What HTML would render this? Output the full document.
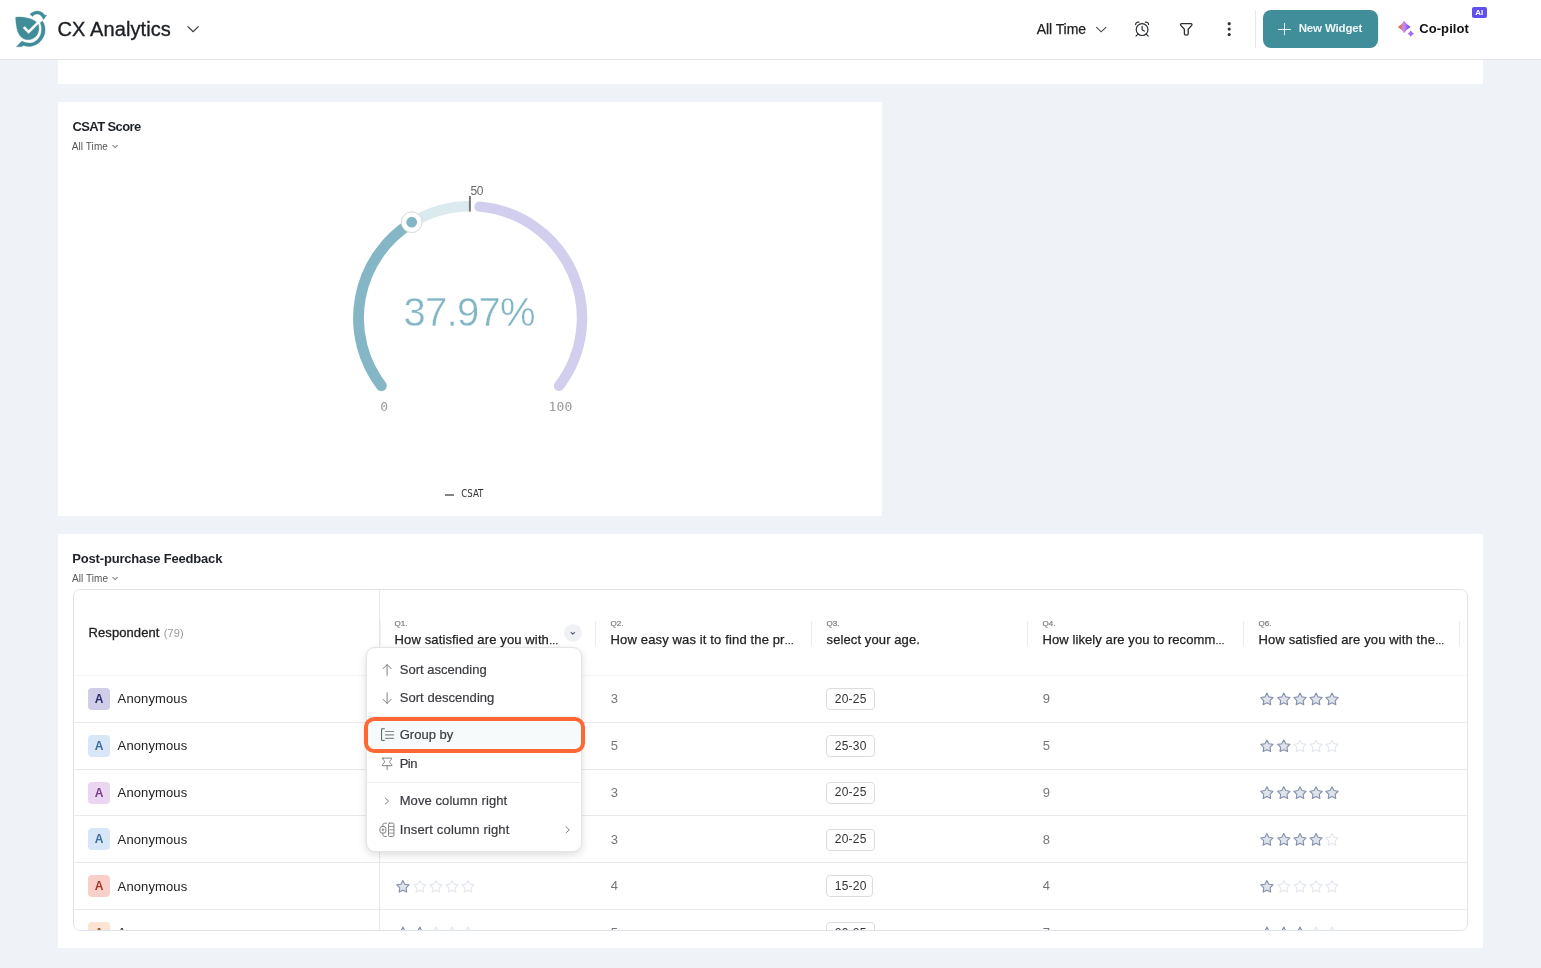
<!DOCTYPE html>
<html lang="en"><head><meta charset="utf-8"><title>CX Analytics</title>
<style>
html,body{margin:0;padding:0}
body{width:1541px;height:968px;overflow:hidden;background:#eff3f8;position:relative;font-family:"Liberation Sans",sans-serif;color:#222}
.t{position:absolute;line-height:1;white-space:nowrap}
.abs{position:absolute}
.card{position:absolute;background:#fff}
svg{position:absolute;overflow:visible}
.hl{position:absolute;height:1px;background:#e9eaee}
.vl{position:absolute;width:1px;background:#e6e9f0}
.av{position:absolute;width:22px;height:22px;border-radius:4px;text-align:center;font-weight:700;font-size:12px;line-height:22px}
.tag{position:absolute;height:20px;border:1px solid #dcdcdc;border-radius:4px;box-sizing:content-box;background:#fff}
</style></head><body>
<div id="app" style="position:absolute;left:0;top:0;width:1541px;height:968px;will-change:transform">

<div class="abs" style="left:0;top:0;width:1541px;height:59px;background:#fff;border-bottom:1px solid #e2e2e2"></div>
<svg id="logo" style="left:0;top:0" width="60" height="59" viewBox="0 0 60 59">
<g fill="#408d99" stroke="#408d99" stroke-width="0.35" stroke-linejoin="round">
<path d="M15.7 17.2 C22 16.6 31 17.6 36.4 22.2 L28.6 30.0 L24.7 26.1 L22.7 28.1 L28.6 34.0 L38.3 24.3 C39.6 28 39 33 35.8 36.6 C32.6 40 27 40.6 23 38.4 C19.4 36.2 17.6 32.4 16.8 28 C16.2 24.4 15.6 20.6 15.7 17.2 Z"/>
<path d="M40.2 22.7 L42.4 20.9 C44.6 24 45.8 28.6 44.8 33.2 C43.4 39.6 38.4 44.8 31.6 46.2 C28.8 46.7 26 46.4 23.6 45.5 L21.2 46.8 L16.4 46.8 L21.9 41.1 C24.4 42.6 27.6 43.4 30.6 43 C35.6 42.2 39.6 38.4 41 33.4 C42 29.6 41.6 25.8 40.2 22.7 Z"/>
<path d="M30 14.1 C31.8 12.2 34.6 10.9 37.6 10.9 C40.8 11 43.4 12.8 44.8 15.2 L46.9 15.1 L43.2 19.7 C42.6 17.6 41.4 15.6 39.4 14.6 C37.2 13.5 34.4 14 32.4 16.6 Z"/>
</g></svg>
<span class="t" style="left:57.6px;top:18.87px;font-size:20px;font-weight:400;color:#1c1f23;letter-spacing:0.08px;-webkit-text-stroke:0.35px #1c1f23;">CX Analytics</span>
<svg style="left:186px;top:24px" width="14" height="10" viewBox="186 24 14 10"><path d="M187.6 26.4 L193.1 31.6 L198.6 26.4" fill="none" stroke="#333" stroke-width="1.2"/></svg>
<span class="t" style="left:1036.8px;top:22.15px;font-size:14px;font-weight:400;color:#222;letter-spacing:-0.08px;-webkit-text-stroke:0.25px #222;">All Time</span>
<svg style="left:1094px;top:24px" width="14" height="10" viewBox="1094 24 14 10"><path d="M1096.3 27.2 L1101.2 31.8 L1106.1 27.2" fill="none" stroke="#444" stroke-width="1.1"/></svg>
<svg style="left:1132px;top:19px" width="20" height="20" viewBox="1132 19 20 20" fill="none" stroke="#2b2f33" stroke-width="1.2" stroke-linecap="round" stroke-linejoin="round">
<circle cx="1142.1" cy="29.6" r="5.9"/>
<path d="M1142.1 26.3 V29.8 L1144.3 31.1"/>
<path d="M1135.6 24.6 C1135.6 23 1137 21.8 1138.8 22.1"/>
<path d="M1148.6 24.6 C1148.6 23 1147.2 21.8 1145.4 22.1"/>
<path d="M1138 34.2 L1136 36.2 M1146.2 34.2 L1148.2 36.2"/>
</svg>
<svg style="left:1176px;top:19px" width="20" height="20" viewBox="1176 19 20 20" fill="none" stroke="#2b2f33" stroke-width="1.3" stroke-linejoin="round">
<path d="M1181.6 23.6 H1190.9 C1191.9 23.6 1192.3 24.7 1191.7 25.4 L1188.2 29.2 V34 C1188.2 35.4 1184.4 35.4 1184.4 34 V29.2 L1180.8 25.4 C1180.2 24.7 1180.6 23.6 1181.6 23.6 Z"/>
</svg>
<svg style="left:1224px;top:19px" width="10" height="20" viewBox="1224 19 10 20"><circle cx="1229.2" cy="23.7" r="1.6" fill="#333"/><circle cx="1229.2" cy="29.1" r="1.6" fill="#333"/><circle cx="1229.2" cy="34.6" r="1.6" fill="#333"/></svg>
<div class="vl" style="left:1255px;top:10px;height:38px;background:#e8e8e8"></div>
<div class="abs" style="left:1263px;top:10px;width:115px;height:38px;border-radius:8px;background:#408e9a"></div>
<svg style="left:1276px;top:21px" width="16" height="16" viewBox="1276 21 16 16"><path d="M1278 29.5 H1291 M1284.5 23 V35.2" stroke="#e6f2f3" stroke-width="1" fill="none"/></svg>
<span class="t" style="left:1298.7px;top:23.37px;font-size:11.5px;font-weight:700;color:#eef7f8;letter-spacing:-0.16px;">New Widget</span>
<div class="vl" style="left:1378px;top:11px;height:36px;background:#f0f0f0"></div>
<svg style="left:1396px;top:19px" width="20" height="20" viewBox="1396 19 20 20">
<defs><linearGradient id="cg" x1="0" y1="0" x2="1" y2="0"><stop offset="0" stop-color="#e2703f"/><stop offset="0.2" stop-color="#d9745e"/><stop offset="0.32" stop-color="#d57fae"/><stop offset="0.45" stop-color="#cf86ea"/><stop offset="0.62" stop-color="#b47af2"/><stop offset="0.85" stop-color="#6d4ff6"/><stop offset="1" stop-color="#7a5cf6"/></linearGradient>
<linearGradient id="cg2" x1="0" y1="1" x2="1" y2="0"><stop offset="0" stop-color="#d07ef0"/><stop offset="0.5" stop-color="#a86cf4"/><stop offset="1" stop-color="#6a48f6"/></linearGradient></defs>
<path d="M1404.2 20.8 Q1406.5 24.7 1410.6 27 Q1406.5 29.3 1404.2 33.2 Q1401.9 29.3 1397.8 27 Q1401.9 24.7 1404.2 20.8 Z" fill="url(#cg)"/>
<path d="M1410.7 30.6 Q1411.9 32.8 1414 33.8 Q1411.9 34.8 1410.7 37 Q1409.5 34.8 1407.6 33.8 Q1409.5 32.8 1410.7 30.6 Z" fill="url(#cg2)"/>
</svg>
<span class="t" style="left:1419.2px;top:21.90px;font-size:13px;font-weight:700;color:#111;letter-spacing:0.09px;">Co-pilot</span>
<div class="abs" style="left:1472px;top:7px;width:15px;height:11px;border-radius:2px;background:#5d4ff0"></div>
<span class="t" style="left:1475.2px;top:8.83px;font-size:8px;font-weight:700;color:#fff;letter-spacing:0px;">AI</span>
<div class="card" style="left:58px;top:60px;width:1425px;height:24px"></div>
<div class="card" style="left:58px;top:102px;width:824px;height:414px"></div>
<div class="card" style="left:58px;top:534px;width:1425px;height:414px"></div>
<span class="t" style="left:72.5px;top:119.90px;font-size:13px;font-weight:700;color:#1f2328;letter-spacing:-0.6px;">CSAT Score</span>
<span class="t" style="left:71.8px;top:142.13px;font-size:10px;font-weight:400;color:#555;letter-spacing:0.07px;">All Time</span>
<svg style="left:110px;top:142px" width="10" height="8" viewBox="110 142 10 8"><path d="M112.6 145.0 L115.1 147.6 L117.6 145.0" fill="none" stroke="#555" stroke-width="1"/></svg>
<span class="t" style="left:72.3px;top:552.10px;font-size:13px;font-weight:700;color:#1f2328;letter-spacing:-0.18px;">Post-purchase Feedback</span>
<span class="t" style="left:72.0px;top:574.03px;font-size:10px;font-weight:400;color:#555;letter-spacing:0.07px;">All Time</span>
<svg style="left:110px;top:574px" width="10" height="8" viewBox="110 574 10 8"><path d="M112.6 577.0 L115.1 579.6 L117.6 577.0" fill="none" stroke="#555" stroke-width="1"/></svg>
<svg style="left:300px;top:160px" width="360" height="360" viewBox="300 160 360 360" fill="none"><path d="M411.97 222.65 A111.75 111.75 0 0 1 470.25 206.25" stroke="#dbeaef" stroke-width="10.5"/><path d="M479.60 206.64 A111.75 111.75 0 0 1 559.14 385.72" stroke="#d2cfee" stroke-width="10.5" stroke-linecap="round"/><path d="M381.36 385.72 A111.75 111.75 0 0 1 411.97 222.65" stroke="#84b6c6" stroke-width="10.8" stroke-linecap="round"/><line x1="469.9" y1="196" x2="469.9" y2="211.6" stroke="#777" stroke-width="2"/><circle cx="411.7" cy="222.2" r="10.4" fill="#fff" stroke="#d9d9d9" stroke-width="1"/><circle cx="411.7" cy="222.2" r="5.4" fill="#84b6c6"/></svg>
<span class="t" style="left:470.4px;top:184.84px;font-size:12px;font-weight:400;color:#666;letter-spacing:-0.4px;">50</span>
<span class="t" style="left:403.6px;top:292.14px;font-size:40px;font-weight:400;color:#82b5c5;letter-spacing:-0.75px;-webkit-text-stroke:0.45px #fff;">37.97%</span>
<span class="t" style="left:380.3px;top:400.40px;font-size:13px;font-weight:400;color:#999;letter-spacing:0px;font-family:'DejaVu Sans Mono','Liberation Mono',monospace;">0</span>
<span class="t" style="left:548.4px;top:400.40px;font-size:13px;font-weight:400;color:#999;letter-spacing:0.17px;font-family:'DejaVu Sans Mono','Liberation Mono',monospace;">100</span>
<div class="abs" style="left:445px;top:494px;width:9px;height:2px;background:#848484"></div>
<span class="t" style="left:461.3px;top:488.87px;font-size:9.6px;font-weight:400;color:#333;letter-spacing:-0.05px;font-family:'DejaVu Sans Condensed','Liberation Sans',sans-serif;">CSAT</span>
<div class="abs" id="clip" style="left:74px;top:590px;width:1393px;height:340px;overflow:hidden;border-radius:6px">
<div class="abs" style="left:-74px;top:-590px;width:1541px;height:968px">
<div class="hl" style="left:74px;top:675px;width:1393px;background:#f5f5f8"></div>
<div class="hl" style="left:74px;top:722px;width:1393px"></div>
<div class="hl" style="left:74px;top:769px;width:1393px"></div>
<div class="hl" style="left:74px;top:815px;width:1393px"></div>
<div class="hl" style="left:74px;top:862px;width:1393px"></div>
<div class="hl" style="left:74px;top:909px;width:1393px"></div>
<div class="vl" style="left:379px;top:590px;height:340px;background:#e6e7ea"></div>
<div class="vl" style="left:380px;top:621px;height:24px;background:#efefef"></div>
<div class="vl" style="left:595px;top:621px;height:25px;background:#ececec"></div>
<div class="vl" style="left:811px;top:621px;height:25px;background:#ececec"></div>
<div class="vl" style="left:1027px;top:621px;height:25px;background:#ececec"></div>
<div class="vl" style="left:1243px;top:621px;height:25px;background:#ececec"></div>
<div class="vl" style="left:1459px;top:621px;height:25px;background:#ececec"></div>
<span class="t" style="left:88.5px;top:625.70px;font-size:13px;font-weight:400;color:#222;letter-spacing:0.09px;-webkit-text-stroke:0.3px #222;">Respondent</span>
<span class="t" style="left:163.8px;top:627.89px;font-size:11px;font-weight:400;color:#999;letter-spacing:0.06px;">(79)</span>
<span class="t" style="left:394.6px;top:620.33px;font-size:8px;font-weight:400;color:#7a7a7a;letter-spacing:0px;-webkit-text-stroke:0.2px #7a7a7a;">Q1.</span>
<span class="t" style="left:394.6px;top:633.00px;font-size:13px;font-weight:400;color:#222;letter-spacing:0.13px;-webkit-text-stroke:0.25px #222;">How satisfied are you with<span style="font-size:9.5px;letter-spacing:0">…</span></span>
<span class="t" style="left:610.6px;top:620.33px;font-size:8px;font-weight:400;color:#7a7a7a;letter-spacing:0px;-webkit-text-stroke:0.2px #7a7a7a;">Q2.</span>
<span class="t" style="left:610.6px;top:633.00px;font-size:13px;font-weight:400;color:#222;letter-spacing:0.14px;-webkit-text-stroke:0.25px #222;">How easy was it to find the pr<span style="font-size:9.5px;letter-spacing:0">…</span></span>
<span class="t" style="left:826.6px;top:620.33px;font-size:8px;font-weight:400;color:#7a7a7a;letter-spacing:0px;-webkit-text-stroke:0.2px #7a7a7a;">Q3.</span>
<span class="t" style="left:826.6px;top:633.00px;font-size:13px;font-weight:400;color:#222;letter-spacing:0.1px;-webkit-text-stroke:0.25px #222;">select your age.</span>
<span class="t" style="left:1042.6px;top:620.33px;font-size:8px;font-weight:400;color:#7a7a7a;letter-spacing:0px;-webkit-text-stroke:0.2px #7a7a7a;">Q4.</span>
<span class="t" style="left:1042.6px;top:633.00px;font-size:13px;font-weight:400;color:#222;letter-spacing:0.08px;-webkit-text-stroke:0.25px #222;">How likely are you to recomm<span style="font-size:9.5px;letter-spacing:0">…</span></span>
<span class="t" style="left:1258.6px;top:620.33px;font-size:8px;font-weight:400;color:#7a7a7a;letter-spacing:0px;-webkit-text-stroke:0.2px #7a7a7a;">Q6.</span>
<span class="t" style="left:1258.6px;top:633.00px;font-size:13px;font-weight:400;color:#222;letter-spacing:0.125px;-webkit-text-stroke:0.25px #222;">How satisfied are you with the<span style="font-size:9.5px;letter-spacing:0">…</span></span>
<svg style="left:563px;top:623px" width="20" height="20" viewBox="563 623 20 20"><circle cx="572.9" cy="632.9" r="8.9" fill="#f0f1f5"/><path d="M570.8 632.1 L572.8 634.1 L574.8 632.1" fill="none" stroke="#5b6478" stroke-width="1.25"/></svg>
<svg style="left:0;top:0" width="1541" height="968" viewBox="0 0 1541 968">
<path transform="translate(402.9 699.1)" d="M0.00 -6.00 L1.94 -2.22 L6.13 -1.54 L3.14 1.47 L3.79 5.67 L0.00 3.75 L-3.79 5.67 L-3.14 1.47 L-6.13 -1.54 L-1.94 -2.22 Z" fill="#dfe3ec" stroke="#8490aa" stroke-width="1.1" stroke-linejoin="round"/><path transform="translate(419.8 699.1)" d="M0.00 -6.00 L1.94 -2.22 L6.13 -1.54 L3.14 1.47 L3.79 5.67 L0.00 3.75 L-3.79 5.67 L-3.14 1.47 L-6.13 -1.54 L-1.94 -2.22 Z" fill="#dfe3ec" stroke="#8490aa" stroke-width="1.1" stroke-linejoin="round"/><path transform="translate(435.9 699.1)" d="M0.00 -6.00 L1.94 -2.22 L6.13 -1.54 L3.14 1.47 L3.79 5.67 L0.00 3.75 L-3.79 5.67 L-3.14 1.47 L-6.13 -1.54 L-1.94 -2.22 Z" fill="#dfe3ec" stroke="#8490aa" stroke-width="1.1" stroke-linejoin="round"/><path transform="translate(452.0 699.1)" d="M0.00 -6.00 L1.94 -2.22 L6.13 -1.54 L3.14 1.47 L3.79 5.67 L0.00 3.75 L-3.79 5.67 L-3.14 1.47 L-6.13 -1.54 L-1.94 -2.22 Z" fill="#dfe3ec" stroke="#8490aa" stroke-width="1.1" stroke-linejoin="round"/><path transform="translate(468.0 699.1)" d="M0.00 -6.00 L1.94 -2.22 L6.13 -1.54 L3.14 1.47 L3.79 5.67 L0.00 3.75 L-3.79 5.67 L-3.14 1.47 L-6.13 -1.54 L-1.94 -2.22 Z" fill="#dfe3ec" stroke="#8490aa" stroke-width="1.1" stroke-linejoin="round"/>
<path transform="translate(1266.9 699.1)" d="M0.00 -6.00 L1.94 -2.22 L6.13 -1.54 L3.14 1.47 L3.79 5.67 L0.00 3.75 L-3.79 5.67 L-3.14 1.47 L-6.13 -1.54 L-1.94 -2.22 Z" fill="#dfe3ec" stroke="#8490aa" stroke-width="1.1" stroke-linejoin="round"/><path transform="translate(1283.8 699.1)" d="M0.00 -6.00 L1.94 -2.22 L6.13 -1.54 L3.14 1.47 L3.79 5.67 L0.00 3.75 L-3.79 5.67 L-3.14 1.47 L-6.13 -1.54 L-1.94 -2.22 Z" fill="#dfe3ec" stroke="#8490aa" stroke-width="1.1" stroke-linejoin="round"/><path transform="translate(1300.0 699.1)" d="M0.00 -6.00 L1.94 -2.22 L6.13 -1.54 L3.14 1.47 L3.79 5.67 L0.00 3.75 L-3.79 5.67 L-3.14 1.47 L-6.13 -1.54 L-1.94 -2.22 Z" fill="#dfe3ec" stroke="#8490aa" stroke-width="1.1" stroke-linejoin="round"/><path transform="translate(1316.1 699.1)" d="M0.00 -6.00 L1.94 -2.22 L6.13 -1.54 L3.14 1.47 L3.79 5.67 L0.00 3.75 L-3.79 5.67 L-3.14 1.47 L-6.13 -1.54 L-1.94 -2.22 Z" fill="#dfe3ec" stroke="#8490aa" stroke-width="1.1" stroke-linejoin="round"/><path transform="translate(1332.0 699.1)" d="M0.00 -6.00 L1.94 -2.22 L6.13 -1.54 L3.14 1.47 L3.79 5.67 L0.00 3.75 L-3.79 5.67 L-3.14 1.47 L-6.13 -1.54 L-1.94 -2.22 Z" fill="#dfe3ec" stroke="#8490aa" stroke-width="1.1" stroke-linejoin="round"/>
<path transform="translate(402.9 745.9)" d="M0.00 -6.00 L1.94 -2.22 L6.13 -1.54 L3.14 1.47 L3.79 5.67 L0.00 3.75 L-3.79 5.67 L-3.14 1.47 L-6.13 -1.54 L-1.94 -2.22 Z" fill="#dfe3ec" stroke="#8490aa" stroke-width="1.1" stroke-linejoin="round"/><path transform="translate(419.8 745.9)" d="M0.00 -6.00 L1.94 -2.22 L6.13 -1.54 L3.14 1.47 L3.79 5.67 L0.00 3.75 L-3.79 5.67 L-3.14 1.47 L-6.13 -1.54 L-1.94 -2.22 Z" fill="#dfe3ec" stroke="#8490aa" stroke-width="1.1" stroke-linejoin="round"/><path transform="translate(435.9 745.9)" d="M0.00 -6.00 L1.94 -2.22 L6.13 -1.54 L3.14 1.47 L3.79 5.67 L0.00 3.75 L-3.79 5.67 L-3.14 1.47 L-6.13 -1.54 L-1.94 -2.22 Z" fill="#fff" stroke="#e4e7ef" stroke-width="1.15" stroke-linejoin="round"/><path transform="translate(452.0 745.9)" d="M0.00 -6.00 L1.94 -2.22 L6.13 -1.54 L3.14 1.47 L3.79 5.67 L0.00 3.75 L-3.79 5.67 L-3.14 1.47 L-6.13 -1.54 L-1.94 -2.22 Z" fill="#fff" stroke="#e4e7ef" stroke-width="1.15" stroke-linejoin="round"/><path transform="translate(468.0 745.9)" d="M0.00 -6.00 L1.94 -2.22 L6.13 -1.54 L3.14 1.47 L3.79 5.67 L0.00 3.75 L-3.79 5.67 L-3.14 1.47 L-6.13 -1.54 L-1.94 -2.22 Z" fill="#fff" stroke="#e4e7ef" stroke-width="1.15" stroke-linejoin="round"/>
<path transform="translate(1266.9 745.9)" d="M0.00 -6.00 L1.94 -2.22 L6.13 -1.54 L3.14 1.47 L3.79 5.67 L0.00 3.75 L-3.79 5.67 L-3.14 1.47 L-6.13 -1.54 L-1.94 -2.22 Z" fill="#dfe3ec" stroke="#8490aa" stroke-width="1.1" stroke-linejoin="round"/><path transform="translate(1283.8 745.9)" d="M0.00 -6.00 L1.94 -2.22 L6.13 -1.54 L3.14 1.47 L3.79 5.67 L0.00 3.75 L-3.79 5.67 L-3.14 1.47 L-6.13 -1.54 L-1.94 -2.22 Z" fill="#dfe3ec" stroke="#8490aa" stroke-width="1.1" stroke-linejoin="round"/><path transform="translate(1300.0 745.9)" d="M0.00 -6.00 L1.94 -2.22 L6.13 -1.54 L3.14 1.47 L3.79 5.67 L0.00 3.75 L-3.79 5.67 L-3.14 1.47 L-6.13 -1.54 L-1.94 -2.22 Z" fill="#fff" stroke="#e4e7ef" stroke-width="1.15" stroke-linejoin="round"/><path transform="translate(1316.1 745.9)" d="M0.00 -6.00 L1.94 -2.22 L6.13 -1.54 L3.14 1.47 L3.79 5.67 L0.00 3.75 L-3.79 5.67 L-3.14 1.47 L-6.13 -1.54 L-1.94 -2.22 Z" fill="#fff" stroke="#e4e7ef" stroke-width="1.15" stroke-linejoin="round"/><path transform="translate(1332.0 745.9)" d="M0.00 -6.00 L1.94 -2.22 L6.13 -1.54 L3.14 1.47 L3.79 5.67 L0.00 3.75 L-3.79 5.67 L-3.14 1.47 L-6.13 -1.54 L-1.94 -2.22 Z" fill="#fff" stroke="#e4e7ef" stroke-width="1.15" stroke-linejoin="round"/>
<path transform="translate(402.9 792.8)" d="M0.00 -6.00 L1.94 -2.22 L6.13 -1.54 L3.14 1.47 L3.79 5.67 L0.00 3.75 L-3.79 5.67 L-3.14 1.47 L-6.13 -1.54 L-1.94 -2.22 Z" fill="#dfe3ec" stroke="#8490aa" stroke-width="1.1" stroke-linejoin="round"/><path transform="translate(419.8 792.8)" d="M0.00 -6.00 L1.94 -2.22 L6.13 -1.54 L3.14 1.47 L3.79 5.67 L0.00 3.75 L-3.79 5.67 L-3.14 1.47 L-6.13 -1.54 L-1.94 -2.22 Z" fill="#dfe3ec" stroke="#8490aa" stroke-width="1.1" stroke-linejoin="round"/><path transform="translate(435.9 792.8)" d="M0.00 -6.00 L1.94 -2.22 L6.13 -1.54 L3.14 1.47 L3.79 5.67 L0.00 3.75 L-3.79 5.67 L-3.14 1.47 L-6.13 -1.54 L-1.94 -2.22 Z" fill="#dfe3ec" stroke="#8490aa" stroke-width="1.1" stroke-linejoin="round"/><path transform="translate(452.0 792.8)" d="M0.00 -6.00 L1.94 -2.22 L6.13 -1.54 L3.14 1.47 L3.79 5.67 L0.00 3.75 L-3.79 5.67 L-3.14 1.47 L-6.13 -1.54 L-1.94 -2.22 Z" fill="#dfe3ec" stroke="#8490aa" stroke-width="1.1" stroke-linejoin="round"/><path transform="translate(468.0 792.8)" d="M0.00 -6.00 L1.94 -2.22 L6.13 -1.54 L3.14 1.47 L3.79 5.67 L0.00 3.75 L-3.79 5.67 L-3.14 1.47 L-6.13 -1.54 L-1.94 -2.22 Z" fill="#dfe3ec" stroke="#8490aa" stroke-width="1.1" stroke-linejoin="round"/>
<path transform="translate(1266.9 792.8)" d="M0.00 -6.00 L1.94 -2.22 L6.13 -1.54 L3.14 1.47 L3.79 5.67 L0.00 3.75 L-3.79 5.67 L-3.14 1.47 L-6.13 -1.54 L-1.94 -2.22 Z" fill="#dfe3ec" stroke="#8490aa" stroke-width="1.1" stroke-linejoin="round"/><path transform="translate(1283.8 792.8)" d="M0.00 -6.00 L1.94 -2.22 L6.13 -1.54 L3.14 1.47 L3.79 5.67 L0.00 3.75 L-3.79 5.67 L-3.14 1.47 L-6.13 -1.54 L-1.94 -2.22 Z" fill="#dfe3ec" stroke="#8490aa" stroke-width="1.1" stroke-linejoin="round"/><path transform="translate(1300.0 792.8)" d="M0.00 -6.00 L1.94 -2.22 L6.13 -1.54 L3.14 1.47 L3.79 5.67 L0.00 3.75 L-3.79 5.67 L-3.14 1.47 L-6.13 -1.54 L-1.94 -2.22 Z" fill="#dfe3ec" stroke="#8490aa" stroke-width="1.1" stroke-linejoin="round"/><path transform="translate(1316.1 792.8)" d="M0.00 -6.00 L1.94 -2.22 L6.13 -1.54 L3.14 1.47 L3.79 5.67 L0.00 3.75 L-3.79 5.67 L-3.14 1.47 L-6.13 -1.54 L-1.94 -2.22 Z" fill="#dfe3ec" stroke="#8490aa" stroke-width="1.1" stroke-linejoin="round"/><path transform="translate(1332.0 792.8)" d="M0.00 -6.00 L1.94 -2.22 L6.13 -1.54 L3.14 1.47 L3.79 5.67 L0.00 3.75 L-3.79 5.67 L-3.14 1.47 L-6.13 -1.54 L-1.94 -2.22 Z" fill="#dfe3ec" stroke="#8490aa" stroke-width="1.1" stroke-linejoin="round"/>
<path transform="translate(402.9 839.5)" d="M0.00 -6.00 L1.94 -2.22 L6.13 -1.54 L3.14 1.47 L3.79 5.67 L0.00 3.75 L-3.79 5.67 L-3.14 1.47 L-6.13 -1.54 L-1.94 -2.22 Z" fill="#dfe3ec" stroke="#8490aa" stroke-width="1.1" stroke-linejoin="round"/><path transform="translate(419.8 839.5)" d="M0.00 -6.00 L1.94 -2.22 L6.13 -1.54 L3.14 1.47 L3.79 5.67 L0.00 3.75 L-3.79 5.67 L-3.14 1.47 L-6.13 -1.54 L-1.94 -2.22 Z" fill="#dfe3ec" stroke="#8490aa" stroke-width="1.1" stroke-linejoin="round"/><path transform="translate(435.9 839.5)" d="M0.00 -6.00 L1.94 -2.22 L6.13 -1.54 L3.14 1.47 L3.79 5.67 L0.00 3.75 L-3.79 5.67 L-3.14 1.47 L-6.13 -1.54 L-1.94 -2.22 Z" fill="#dfe3ec" stroke="#8490aa" stroke-width="1.1" stroke-linejoin="round"/><path transform="translate(452.0 839.5)" d="M0.00 -6.00 L1.94 -2.22 L6.13 -1.54 L3.14 1.47 L3.79 5.67 L0.00 3.75 L-3.79 5.67 L-3.14 1.47 L-6.13 -1.54 L-1.94 -2.22 Z" fill="#dfe3ec" stroke="#8490aa" stroke-width="1.1" stroke-linejoin="round"/><path transform="translate(468.0 839.5)" d="M0.00 -6.00 L1.94 -2.22 L6.13 -1.54 L3.14 1.47 L3.79 5.67 L0.00 3.75 L-3.79 5.67 L-3.14 1.47 L-6.13 -1.54 L-1.94 -2.22 Z" fill="#fff" stroke="#e4e7ef" stroke-width="1.15" stroke-linejoin="round"/>
<path transform="translate(1266.9 839.5)" d="M0.00 -6.00 L1.94 -2.22 L6.13 -1.54 L3.14 1.47 L3.79 5.67 L0.00 3.75 L-3.79 5.67 L-3.14 1.47 L-6.13 -1.54 L-1.94 -2.22 Z" fill="#dfe3ec" stroke="#8490aa" stroke-width="1.1" stroke-linejoin="round"/><path transform="translate(1283.8 839.5)" d="M0.00 -6.00 L1.94 -2.22 L6.13 -1.54 L3.14 1.47 L3.79 5.67 L0.00 3.75 L-3.79 5.67 L-3.14 1.47 L-6.13 -1.54 L-1.94 -2.22 Z" fill="#dfe3ec" stroke="#8490aa" stroke-width="1.1" stroke-linejoin="round"/><path transform="translate(1300.0 839.5)" d="M0.00 -6.00 L1.94 -2.22 L6.13 -1.54 L3.14 1.47 L3.79 5.67 L0.00 3.75 L-3.79 5.67 L-3.14 1.47 L-6.13 -1.54 L-1.94 -2.22 Z" fill="#dfe3ec" stroke="#8490aa" stroke-width="1.1" stroke-linejoin="round"/><path transform="translate(1316.1 839.5)" d="M0.00 -6.00 L1.94 -2.22 L6.13 -1.54 L3.14 1.47 L3.79 5.67 L0.00 3.75 L-3.79 5.67 L-3.14 1.47 L-6.13 -1.54 L-1.94 -2.22 Z" fill="#dfe3ec" stroke="#8490aa" stroke-width="1.1" stroke-linejoin="round"/><path transform="translate(1332.0 839.5)" d="M0.00 -6.00 L1.94 -2.22 L6.13 -1.54 L3.14 1.47 L3.79 5.67 L0.00 3.75 L-3.79 5.67 L-3.14 1.47 L-6.13 -1.54 L-1.94 -2.22 Z" fill="#fff" stroke="#e4e7ef" stroke-width="1.15" stroke-linejoin="round"/>
<path transform="translate(402.9 886.4)" d="M0.00 -6.00 L1.94 -2.22 L6.13 -1.54 L3.14 1.47 L3.79 5.67 L0.00 3.75 L-3.79 5.67 L-3.14 1.47 L-6.13 -1.54 L-1.94 -2.22 Z" fill="#dfe3ec" stroke="#8490aa" stroke-width="1.1" stroke-linejoin="round"/><path transform="translate(419.8 886.4)" d="M0.00 -6.00 L1.94 -2.22 L6.13 -1.54 L3.14 1.47 L3.79 5.67 L0.00 3.75 L-3.79 5.67 L-3.14 1.47 L-6.13 -1.54 L-1.94 -2.22 Z" fill="#fff" stroke="#e4e7ef" stroke-width="1.15" stroke-linejoin="round"/><path transform="translate(435.9 886.4)" d="M0.00 -6.00 L1.94 -2.22 L6.13 -1.54 L3.14 1.47 L3.79 5.67 L0.00 3.75 L-3.79 5.67 L-3.14 1.47 L-6.13 -1.54 L-1.94 -2.22 Z" fill="#fff" stroke="#e4e7ef" stroke-width="1.15" stroke-linejoin="round"/><path transform="translate(452.0 886.4)" d="M0.00 -6.00 L1.94 -2.22 L6.13 -1.54 L3.14 1.47 L3.79 5.67 L0.00 3.75 L-3.79 5.67 L-3.14 1.47 L-6.13 -1.54 L-1.94 -2.22 Z" fill="#fff" stroke="#e4e7ef" stroke-width="1.15" stroke-linejoin="round"/><path transform="translate(468.0 886.4)" d="M0.00 -6.00 L1.94 -2.22 L6.13 -1.54 L3.14 1.47 L3.79 5.67 L0.00 3.75 L-3.79 5.67 L-3.14 1.47 L-6.13 -1.54 L-1.94 -2.22 Z" fill="#fff" stroke="#e4e7ef" stroke-width="1.15" stroke-linejoin="round"/>
<path transform="translate(1266.9 886.4)" d="M0.00 -6.00 L1.94 -2.22 L6.13 -1.54 L3.14 1.47 L3.79 5.67 L0.00 3.75 L-3.79 5.67 L-3.14 1.47 L-6.13 -1.54 L-1.94 -2.22 Z" fill="#dfe3ec" stroke="#8490aa" stroke-width="1.1" stroke-linejoin="round"/><path transform="translate(1283.8 886.4)" d="M0.00 -6.00 L1.94 -2.22 L6.13 -1.54 L3.14 1.47 L3.79 5.67 L0.00 3.75 L-3.79 5.67 L-3.14 1.47 L-6.13 -1.54 L-1.94 -2.22 Z" fill="#fff" stroke="#e4e7ef" stroke-width="1.15" stroke-linejoin="round"/><path transform="translate(1300.0 886.4)" d="M0.00 -6.00 L1.94 -2.22 L6.13 -1.54 L3.14 1.47 L3.79 5.67 L0.00 3.75 L-3.79 5.67 L-3.14 1.47 L-6.13 -1.54 L-1.94 -2.22 Z" fill="#fff" stroke="#e4e7ef" stroke-width="1.15" stroke-linejoin="round"/><path transform="translate(1316.1 886.4)" d="M0.00 -6.00 L1.94 -2.22 L6.13 -1.54 L3.14 1.47 L3.79 5.67 L0.00 3.75 L-3.79 5.67 L-3.14 1.47 L-6.13 -1.54 L-1.94 -2.22 Z" fill="#fff" stroke="#e4e7ef" stroke-width="1.15" stroke-linejoin="round"/><path transform="translate(1332.0 886.4)" d="M0.00 -6.00 L1.94 -2.22 L6.13 -1.54 L3.14 1.47 L3.79 5.67 L0.00 3.75 L-3.79 5.67 L-3.14 1.47 L-6.13 -1.54 L-1.94 -2.22 Z" fill="#fff" stroke="#e4e7ef" stroke-width="1.15" stroke-linejoin="round"/>
<path transform="translate(402.9 933.1)" d="M0.00 -6.00 L1.94 -2.22 L6.13 -1.54 L3.14 1.47 L3.79 5.67 L0.00 3.75 L-3.79 5.67 L-3.14 1.47 L-6.13 -1.54 L-1.94 -2.22 Z" fill="#dfe3ec" stroke="#8490aa" stroke-width="1.1" stroke-linejoin="round"/><path transform="translate(419.8 933.1)" d="M0.00 -6.00 L1.94 -2.22 L6.13 -1.54 L3.14 1.47 L3.79 5.67 L0.00 3.75 L-3.79 5.67 L-3.14 1.47 L-6.13 -1.54 L-1.94 -2.22 Z" fill="#dfe3ec" stroke="#8490aa" stroke-width="1.1" stroke-linejoin="round"/><path transform="translate(435.9 933.1)" d="M0.00 -6.00 L1.94 -2.22 L6.13 -1.54 L3.14 1.47 L3.79 5.67 L0.00 3.75 L-3.79 5.67 L-3.14 1.47 L-6.13 -1.54 L-1.94 -2.22 Z" fill="#fff" stroke="#e4e7ef" stroke-width="1.15" stroke-linejoin="round"/><path transform="translate(452.0 933.1)" d="M0.00 -6.00 L1.94 -2.22 L6.13 -1.54 L3.14 1.47 L3.79 5.67 L0.00 3.75 L-3.79 5.67 L-3.14 1.47 L-6.13 -1.54 L-1.94 -2.22 Z" fill="#fff" stroke="#e4e7ef" stroke-width="1.15" stroke-linejoin="round"/><path transform="translate(468.0 933.1)" d="M0.00 -6.00 L1.94 -2.22 L6.13 -1.54 L3.14 1.47 L3.79 5.67 L0.00 3.75 L-3.79 5.67 L-3.14 1.47 L-6.13 -1.54 L-1.94 -2.22 Z" fill="#fff" stroke="#e4e7ef" stroke-width="1.15" stroke-linejoin="round"/>
<path transform="translate(1266.9 933.1)" d="M0.00 -6.00 L1.94 -2.22 L6.13 -1.54 L3.14 1.47 L3.79 5.67 L0.00 3.75 L-3.79 5.67 L-3.14 1.47 L-6.13 -1.54 L-1.94 -2.22 Z" fill="#dfe3ec" stroke="#8490aa" stroke-width="1.1" stroke-linejoin="round"/><path transform="translate(1283.8 933.1)" d="M0.00 -6.00 L1.94 -2.22 L6.13 -1.54 L3.14 1.47 L3.79 5.67 L0.00 3.75 L-3.79 5.67 L-3.14 1.47 L-6.13 -1.54 L-1.94 -2.22 Z" fill="#dfe3ec" stroke="#8490aa" stroke-width="1.1" stroke-linejoin="round"/><path transform="translate(1300.0 933.1)" d="M0.00 -6.00 L1.94 -2.22 L6.13 -1.54 L3.14 1.47 L3.79 5.67 L0.00 3.75 L-3.79 5.67 L-3.14 1.47 L-6.13 -1.54 L-1.94 -2.22 Z" fill="#dfe3ec" stroke="#8490aa" stroke-width="1.1" stroke-linejoin="round"/><path transform="translate(1316.1 933.1)" d="M0.00 -6.00 L1.94 -2.22 L6.13 -1.54 L3.14 1.47 L3.79 5.67 L0.00 3.75 L-3.79 5.67 L-3.14 1.47 L-6.13 -1.54 L-1.94 -2.22 Z" fill="#fff" stroke="#e4e7ef" stroke-width="1.15" stroke-linejoin="round"/><path transform="translate(1332.0 933.1)" d="M0.00 -6.00 L1.94 -2.22 L6.13 -1.54 L3.14 1.47 L3.79 5.67 L0.00 3.75 L-3.79 5.67 L-3.14 1.47 L-6.13 -1.54 L-1.94 -2.22 Z" fill="#fff" stroke="#e4e7ef" stroke-width="1.15" stroke-linejoin="round"/>
</svg>
<div class="av" style="left:88px;top:687.9px;background:#cfcde8;color:#2d2a6e">A</div>
<span class="t" style="left:117.6px;top:692.40px;font-size:13px;font-weight:400;color:#222;letter-spacing:0.12px;">Anonymous</span>
<span class="t" style="left:610.7px;top:692.10px;font-size:13px;font-weight:400;color:#777;letter-spacing:0px;">3</span>
<div class="tag" style="left:826px;top:688.1px;width:47px"></div>
<span class="t" style="left:834.8px;top:692.84px;font-size:12px;font-weight:400;color:#333;letter-spacing:0.22px;">20-25</span>
<span class="t" style="left:1042.7px;top:692.10px;font-size:13px;font-weight:400;color:#777;letter-spacing:0px;">9</span>
<div class="av" style="left:88px;top:734.7px;background:#d7e7f8;color:#3f6d9b">A</div>
<span class="t" style="left:117.6px;top:739.20px;font-size:13px;font-weight:400;color:#222;letter-spacing:0.12px;">Anonymous</span>
<span class="t" style="left:610.7px;top:738.90px;font-size:13px;font-weight:400;color:#777;letter-spacing:0px;">5</span>
<div class="tag" style="left:826px;top:734.9px;width:47px"></div>
<span class="t" style="left:834.8px;top:739.64px;font-size:12px;font-weight:400;color:#333;letter-spacing:0.22px;">25-30</span>
<span class="t" style="left:1042.7px;top:738.90px;font-size:13px;font-weight:400;color:#777;letter-spacing:0px;">5</span>
<div class="av" style="left:88px;top:781.5px;background:#ead6f1;color:#7b3f8f">A</div>
<span class="t" style="left:117.6px;top:786.00px;font-size:13px;font-weight:400;color:#222;letter-spacing:0.12px;">Anonymous</span>
<span class="t" style="left:610.7px;top:785.70px;font-size:13px;font-weight:400;color:#777;letter-spacing:0px;">3</span>
<div class="tag" style="left:826px;top:781.7px;width:47px"></div>
<span class="t" style="left:834.8px;top:786.44px;font-size:12px;font-weight:400;color:#333;letter-spacing:0.22px;">20-25</span>
<span class="t" style="left:1042.7px;top:785.70px;font-size:13px;font-weight:400;color:#777;letter-spacing:0px;">9</span>
<div class="av" style="left:88px;top:828.3px;background:#d7e7f8;color:#3f6d9b">A</div>
<span class="t" style="left:117.6px;top:832.80px;font-size:13px;font-weight:400;color:#222;letter-spacing:0.12px;">Anonymous</span>
<span class="t" style="left:610.7px;top:832.50px;font-size:13px;font-weight:400;color:#777;letter-spacing:0px;">3</span>
<div class="tag" style="left:826px;top:828.5px;width:47px"></div>
<span class="t" style="left:834.8px;top:833.24px;font-size:12px;font-weight:400;color:#333;letter-spacing:0.22px;">20-25</span>
<span class="t" style="left:1042.7px;top:832.50px;font-size:13px;font-weight:400;color:#777;letter-spacing:0px;">8</span>
<div class="av" style="left:88px;top:875.1px;background:#f9d0c9;color:#a63a2a">A</div>
<span class="t" style="left:117.6px;top:879.60px;font-size:13px;font-weight:400;color:#222;letter-spacing:0.12px;">Anonymous</span>
<span class="t" style="left:610.7px;top:879.30px;font-size:13px;font-weight:400;color:#777;letter-spacing:0px;">4</span>
<div class="tag" style="left:826px;top:875.3px;width:44.6px"></div>
<span class="t" style="left:834.8px;top:880.04px;font-size:12px;font-weight:400;color:#333;letter-spacing:0.22px;">15-20</span>
<span class="t" style="left:1042.7px;top:879.30px;font-size:13px;font-weight:400;color:#777;letter-spacing:0px;">4</span>
<div class="av" style="left:88px;top:921.9px;background:#fbe4d2;color:#a0522d">A</div>
<span class="t" style="left:117.6px;top:926.40px;font-size:13px;font-weight:400;color:#222;letter-spacing:0.12px;">Anonymous</span>
<span class="t" style="left:610.7px;top:926.10px;font-size:13px;font-weight:400;color:#777;letter-spacing:0px;">5</span>
<div class="tag" style="left:826px;top:922.1px;width:47px"></div>
<span class="t" style="left:834.8px;top:926.84px;font-size:12px;font-weight:400;color:#333;letter-spacing:0.22px;">20-25</span>
<span class="t" style="left:1042.7px;top:926.10px;font-size:13px;font-weight:400;color:#777;letter-spacing:0px;">7</span>
</div></div>
<div class="abs" style="left:73px;top:589px;width:1393px;height:340px;border:1px solid #dfe3ec;border-radius:7px;pointer-events:none"></div>
<div class="abs" style="left:366px;top:647px;width:214px;height:203px;border:1px solid #e3e5e9;border-radius:9px;background:#fff;box-shadow:0 3px 9px rgba(0,0,0,0.13),0 0 2px rgba(0,0,0,0.06)"></div>
<div class="hl" style="left:367px;top:716px;width:214px;background:#eff0f3"></div>
<div class="hl" style="left:367px;top:782px;width:214px;background:#eff0f3"></div>
<div class="abs" style="left:364px;top:717px;width:213px;height:28px;border:4px solid #ff6835;border-radius:10px;background:#f7fafb"></div>
<span class="t" style="left:399.7px;top:662.90px;font-size:13px;font-weight:400;color:#3a3a40;letter-spacing:0.02px;-webkit-text-stroke:0.2px #3a3a40;">Sort ascending</span>
<span class="t" style="left:399.7px;top:690.90px;font-size:13px;font-weight:400;color:#3a3a40;letter-spacing:0.05px;-webkit-text-stroke:0.2px #3a3a40;">Sort descending</span>
<span class="t" style="left:399.7px;top:728.20px;font-size:13px;font-weight:400;color:#3a3a40;letter-spacing:0.03px;-webkit-text-stroke:0.2px #3a3a40;">Group by</span>
<span class="t" style="left:399.7px;top:757.10px;font-size:13px;font-weight:400;color:#3a3a40;letter-spacing:-0.5px;-webkit-text-stroke:0.2px #3a3a40;">Pin</span>
<span class="t" style="left:399.7px;top:794.00px;font-size:13px;font-weight:400;color:#3a3a40;letter-spacing:0.08px;-webkit-text-stroke:0.2px #3a3a40;">Move column right</span>
<span class="t" style="left:399.7px;top:823.30px;font-size:13px;font-weight:400;color:#3a3a40;letter-spacing:0.15px;-webkit-text-stroke:0.2px #3a3a40;">Insert column right</span>
<svg style="left:0;top:0" width="1541" height="968" viewBox="0 0 1541 968" fill="none" stroke="#808080" stroke-width="1" stroke-linecap="round" stroke-linejoin="round">
<path d="M387.1 675.4 V664.6 M383 668.7 L387.1 664.6 L391.2 668.7"/>
<path d="M387.1 692.8 V703.4 M383 699.3 L387.1 703.4 L391.2 699.3"/>
<path d="M384.4 728.8 H381.6 V740.4 H384.4" stroke="#5a5a5a"/><path d="M385.6 731.5 H393.6 M385.6 734.9 H393.6 M385.6 738.3 H393.6" stroke-width="1.2" stroke="#8a8a8a"/>
<path d="M382.7 758.1 H391.7 C391.7 760 389.8 760.3 389.6 761.7 C389.6 763.4 391.9 763.7 392 765.7 H382.2 C382.3 763.7 384.5 763.4 384.6 761.7 C384.4 760.3 382.7 760 382.7 758.1 Z M387.1 765.7 V769.7"/>
<path d="M385.4 798.2 L388.6 801.1 L385.4 804"/>
<path d="M566 826.8 L569.4 829.8 L566 832.8"/>
<rect x="388.5" y="823.1" width="5.4" height="13.4" rx="1.2"/><path d="M388.5 826.5 H393.9 M388.5 829.8 H393.9 M388.5 833.1 H393.9" stroke="#9a9a9a"/>
<rect x="379.9" y="826.5" width="6" height="6.6" rx="2.2"/><path d="M382.9 828.8 V830.8 M381.9 829.8 H383.9" stroke-width="0.9"/><path d="M382.9 826.5 V825 C382.9 823.8 383.6 823.2 384.8 823.2 H386.3 M382.9 833.1 V834.6 C382.9 835.8 383.6 836.4 384.8 836.4 H386.3"/>
</svg>
</div>
</body></html>
